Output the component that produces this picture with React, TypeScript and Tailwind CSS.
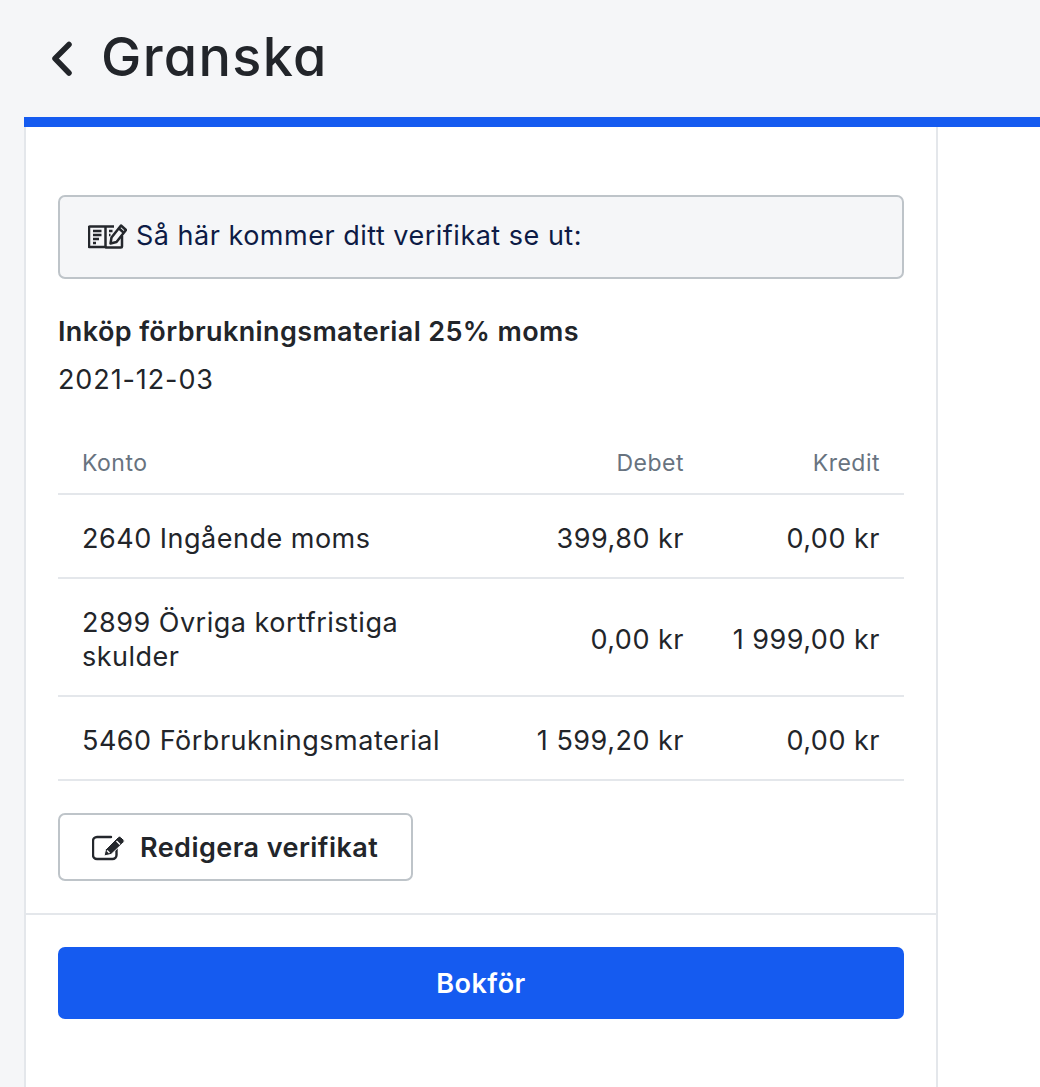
const rows = [
  { konto: '2640 Ingående moms', debet: '399,80 kr', kredit: '0,00 kr', h: 'h-[84px]' },
  { konto: '2899 Övriga kortfristiga skulder', debet: '0,00 kr', kredit: '1 999,00 kr', h: 'h-[118px]' },
  { konto: '5460 Förbrukningsmaterial', debet: '1 599,20 kr', kredit: '0,00 kr', h: 'h-[84px]' },
];

const BackIcon = () => (
  <svg width="24" height="36" viewBox="0 0 24 36" fill="none" stroke="#22252a" strokeWidth="5.500" strokeLinecap="round" strokeLinejoin="round" className="shrink-0">
    <path d="M19 3.500 5 17.500l14 14.500" />
  </svg>
);

const BookIcon = () => (
  <svg width="39" height="26" viewBox="0 0 39 26" fill="none" stroke="#24272c" strokeWidth="2.500" className="shrink-0">
    <path d="M26 3.500H2a1 1 0 0 0-1 1V24h16.500l.5.500h15a1 1 0 0 0 1-1V13" strokeLinejoin="round" />
    <path d="M17.500 4v20" />
    <path d="M5 8h8.500M5 12h8.500M5 16h6M5 20h3" />
    <path d="M21 8h3.500M21 12h1.500" />
    <path d="M22.500 20.500l1-6L33 2.500l5 4.500-9.500 12z" strokeLinejoin="round" fill="#f5f6f8" />
    <path d="M30.500 5l5 4.500" />
  </svg>
);

const EditIcon = () => (
  <svg width="33" height="26" viewBox="0 0 33 26" fill="none" className="shrink-0">
    <path d="M19 2H5a4 4 0 0 0-4 4v14a4 4 0 0 0 4 4h15.500a4 4 0 0 0 4-4v-8" stroke="#24272c" strokeWidth="2.400" strokeLinecap="round" />
    <path d="M12 21l1.500-6.500L26 2a2 2 0 0 1 3 0l2.500 2.500a2 2 0 0 1 0 3L19 19.500z" fill="#24272c" stroke="#fff" strokeWidth="1" />
    <path d="M15 15.500l2.500 2.500M24.500 6l3.500 3.500" stroke="#fff" strokeWidth="1.400" />
  </svg>
);

export default function App() {
  return (
    <div className="h-[1087px] overflow-hidden bg-[#f5f6f8] font-['Inter',sans-serif] tracking-[0.5px] text-[#22252a]">
      <header className="flex h-[117px] items-center pl-[50px]">
        <BackIcon />
        <h1 className="ml-[27px] pb-[3px] text-[54px] font-medium leading-none tracking-[1.3px] [font-feature-settings:'cv11']">Granska</h1>
      </header>
      <div className="ml-6 h-[10px] bg-[#155bf0]" />
      <div className="ml-6 bg-white">
        <main className="w-[914px] border-x-2 border-[#e4e7eb] bg-white">
          <div className="px-8 pt-[68px]">
            <div className="flex h-[84px] items-center gap-[9px] rounded-[7px] border-2 border-[#bec4c9] bg-[#f5f6f8] pb-[2px] pl-[28px] text-[27px] text-[#0d1b45]">
              <BookIcon />
              <span>Så här kommer ditt verifikat se ut:</span>
            </div>
            <h2 className="mt-[36px] text-[27px] font-semibold leading-[34px] tracking-[0.38px]">Inköp förbrukningsmaterial 25% moms</h2>
            <p className="mt-[14px] text-[27px] leading-[34px] tracking-[0.9px]">2021-12-03</p>

            <div className="mt-[38px] flex h-[60px] items-center border-b-2 border-[#e4e7eb] px-6 pb-[2px] text-[23px] text-[#68737f]">
              <div className="flex-1">Konto</div>
              <div className="w-[200px] text-right">Debet</div>
              <div className="w-[196px] text-right">Kredit</div>
            </div>
            {rows.map((r) => (
              <div key={r.konto} className={`flex items-center border-b-2 border-[#e4e7eb] px-6 pt-[5px] text-[27px] leading-[34px] ${r.h}`}>
                <div className="flex-1">{r.konto}</div>
                <div className="w-[200px] text-right">{r.debet}</div>
                <div className="w-[196px] text-right">{r.kredit}</div>
              </div>
            ))}

            <button className="mt-[32px] flex h-[68px] w-[355px] items-center gap-[15px] rounded-[7px] border-2 border-[#bec4c9] bg-white pt-[2px] pl-[32px] text-[27px] font-semibold tracking-[0.44px]">
              <EditIcon />
              Redigera verifikat
            </button>
          </div>
          <div className="mt-[32px] border-t-2 border-[#e4e7eb] px-8 pt-[32px] pb-[68px]">
            <button className="h-[72px] w-full rounded-[7px] bg-[#155bf0] pt-[2px] text-[27px] font-semibold text-white">Bokför</button>
          </div>
        </main>
      </div>
    </div>
  );
}
